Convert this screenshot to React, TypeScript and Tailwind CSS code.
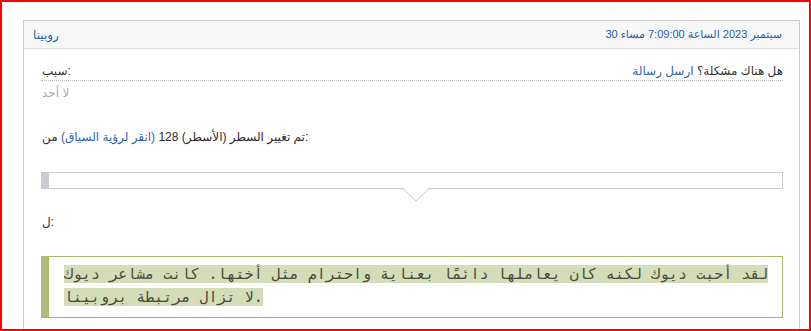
export default function App() {
  return (
    <div className="w-[811px] h-[331px] overflow-hidden border-2 border-[#ff0000] bg-white pl-[21px] pr-[9px] pt-[18px] font-['Liberation_Sans','DejaVu_Sans',sans-serif] text-[12px] text-[#333]">
      <div className="border border-b-0 border-[#cccccc] h-[400px]">
        {/* header */}
        <div className="h-[28px] flex items-center justify-between bg-[#f7f7f7] border-b border-[#dddddd] pl-[9px] pr-[17px]">
          <span className="text-[#1f5fae]">روبينا</span>
          <span dir="rtl" className="text-[11px] text-[#1f5fae]">سبتمبر 2023 الساعة 7:09:00 مساء 30</span>
        </div>

        <div className="pl-[17px] pr-[16px] pt-[12px]">
          <div className="pl-[1px] flex items-center justify-between h-[20px] leading-[18px] border-b border-dotted border-[#bbbbbb]">
            <span>سبب:</span>
            <span>
              هل هناك مشكلة؟ <span className="text-[#2a65b0]">ارسل رسالة</span>
            </span>
          </div>
          <div className="pl-[1px] mt-[3px] leading-[18px] text-[#aaaaaa]">لا أحد</div>

          <div className="pl-[1px] mt-[26px] leading-[18px] text-[#2b2b2b]">
            تم تغيير السطر (الأسطر) 128 <span className="text-[#2a65b0]">(انقر لرؤية السياق)</span> من:
          </div>

          {/* diff context box */}
          <div className="relative mt-[26px] h-[17px] border border-[#cccccc] border-l-[8px] border-l-[#c9ccd1]">
            <svg
              className="absolute left-1/2 -translate-x-[14px] top-full -mt-[1px]"
              width="28"
              height="15"
              viewBox="0 0 28 15"
            >
              <polygon points="0,0 14,14 28,0" fill="#ffffff" />
              <polyline points="0,0.5 14,14 28,0.5" fill="none" stroke="#cccccc" strokeWidth="1" />
            </svg>
          </div>

          <div className="pl-[1px] mt-[24px] leading-[18px]">ل:</div>

          {/* quoted line */}
          <div className="mt-[25px] h-[62px] border border-[#a9b46e] border-l-[8px] border-l-[#b0bb79] pl-[15px] pr-[6px] pt-[6px]">
            <p className="font-['DejaVu_Sans_Mono',monospace] text-[15px] leading-[23px] text-[#4a4a3a]">
              <span className="bg-[#d5ddb8]">
                لقد أحبت ديوك لكنه كان يعاملها دائمًا بعناية واحترام مثل أختها. كانت مشاعر ديوك لا تزال مرتبطة بروبينا.
              </span>
            </p>
          </div>
        </div>
      </div>
    </div>
  );
}
